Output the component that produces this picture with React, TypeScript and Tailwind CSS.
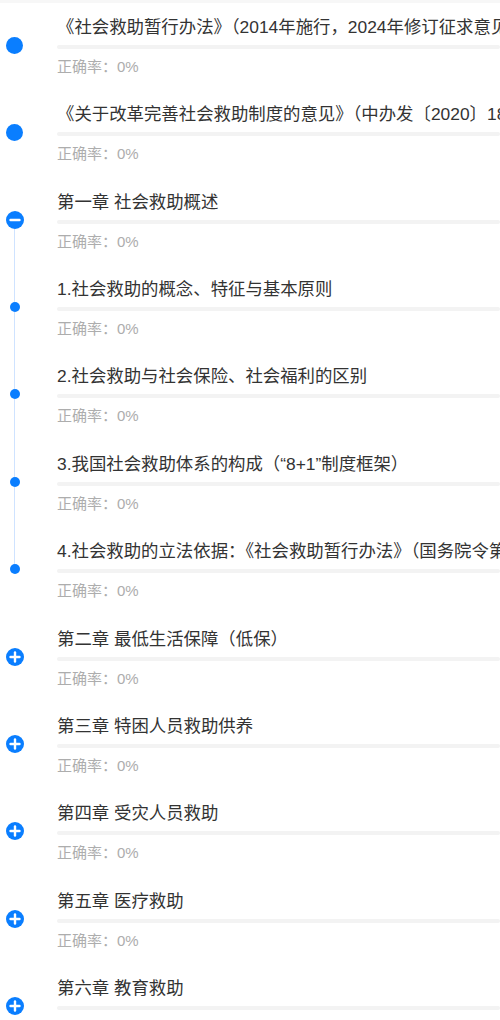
import React from "react";

type Kind = "dot" | "minus" | "small" | "plus";

interface Row {
  title: string;
  kind: Kind;
  lineTop?: boolean;
  lineBottom?: boolean;
}

const rows: Row[] = [
  { title: "《社会救助暂行办法》（2014年施行，2024年修订征求意见稿）", kind: "dot" },
  { title: "《关于改革完善社会救助制度的意见》（中办发〔2020〕18号）", kind: "dot" },
  { title: "第一章 社会救助概述", kind: "minus", lineBottom: true },
  { title: "1.社会救助的概念、特征与基本原则", kind: "small", lineTop: true, lineBottom: true },
  { title: "2.社会救助与社会保险、社会福利的区别", kind: "small", lineTop: true, lineBottom: true },
  { title: "3.我国社会救助体系的构成（“8+1”制度框架）", kind: "small", lineTop: true, lineBottom: true },
  { title: "4.社会救助的立法依据：《社会救助暂行办法》（国务院令第649号）", kind: "small", lineTop: true },
  { title: "第二章 最低生活保障（低保）", kind: "plus" },
  { title: "第三章 特困人员救助供养", kind: "plus" },
  { title: "第四章 受灾人员救助", kind: "plus" },
  { title: "第五章 医疗救助", kind: "plus" },
  { title: "第六章 教育救助", kind: "plus" },
];

const topHeight: Record<Kind, string> = {
  dot: "h-[33.5px]",
  minus: "h-[33px]",
  small: "h-[37px]",
  plus: "h-[33px]",
};

function Icon({ kind }: { kind: Kind }) {
  if (kind === "dot") {
    return <div className="h-[17px] w-[17px] shrink-0 rounded-full bg-[#0a7eff]" />;
  }
  if (kind === "small") {
    return <div className="h-[10px] w-[10px] shrink-0 rounded-full bg-[#0a7eff]" />;
  }
  return (
    <div className="flex h-[18px] w-[18px] shrink-0 items-center justify-center rounded-full bg-[#0a7eff]">
      <svg width="18" height="18" viewBox="0 0 18 18">
        <line x1="4.5" y1="9" x2="13.5" y2="9" stroke="white" strokeWidth="2.4" strokeLinecap="round" />
        {kind === "plus" && (
          <line x1="9" y1="4.5" x2="9" y2="13.5" stroke="white" strokeWidth="2.4" strokeLinecap="round" />
        )}
      </svg>
    </div>
  );
}

function RowItem({ row }: { row: Row }) {
  return (
    <div className="flex h-[87.36px] shrink-0">
      <div className="flex w-[29px] shrink-0 flex-col items-center">
        <div className={`w-px shrink-0 ${topHeight[row.kind]} ${row.lineTop ? "bg-[#cfe3ff]" : ""}`} />
        <Icon kind={row.kind} />
        <div className={`w-px flex-1 ${row.lineBottom ? "bg-[#cfe3ff]" : ""}`} />
      </div>
      <div className="ml-[28px] flex min-w-0 flex-1 flex-col pt-[12px]">
        <div className="whitespace-nowrap text-[17.4px] leading-[24px] text-[#333333]">{row.title}</div>
        <div className="mt-[6px] h-[4px] w-full rounded-full bg-[#f3f3f3]" />
        <div className="mt-[8px] whitespace-nowrap text-[15px] leading-[20px] text-[#adadad]">正确率：0%</div>
      </div>
    </div>
  );
}

export default function App() {
  return (
    <div className="flex h-[1020px] w-[500px] flex-col overflow-hidden bg-white font-['Liberation_Sans','Noto_Sans_CJK_SC',sans-serif]">
      <div className="h-[3px] shrink-0 bg-[#f7f7f7]" />
      {rows.map((r, i) => (
        <RowItem key={i} row={r} />
      ))}
    </div>
  );
}
